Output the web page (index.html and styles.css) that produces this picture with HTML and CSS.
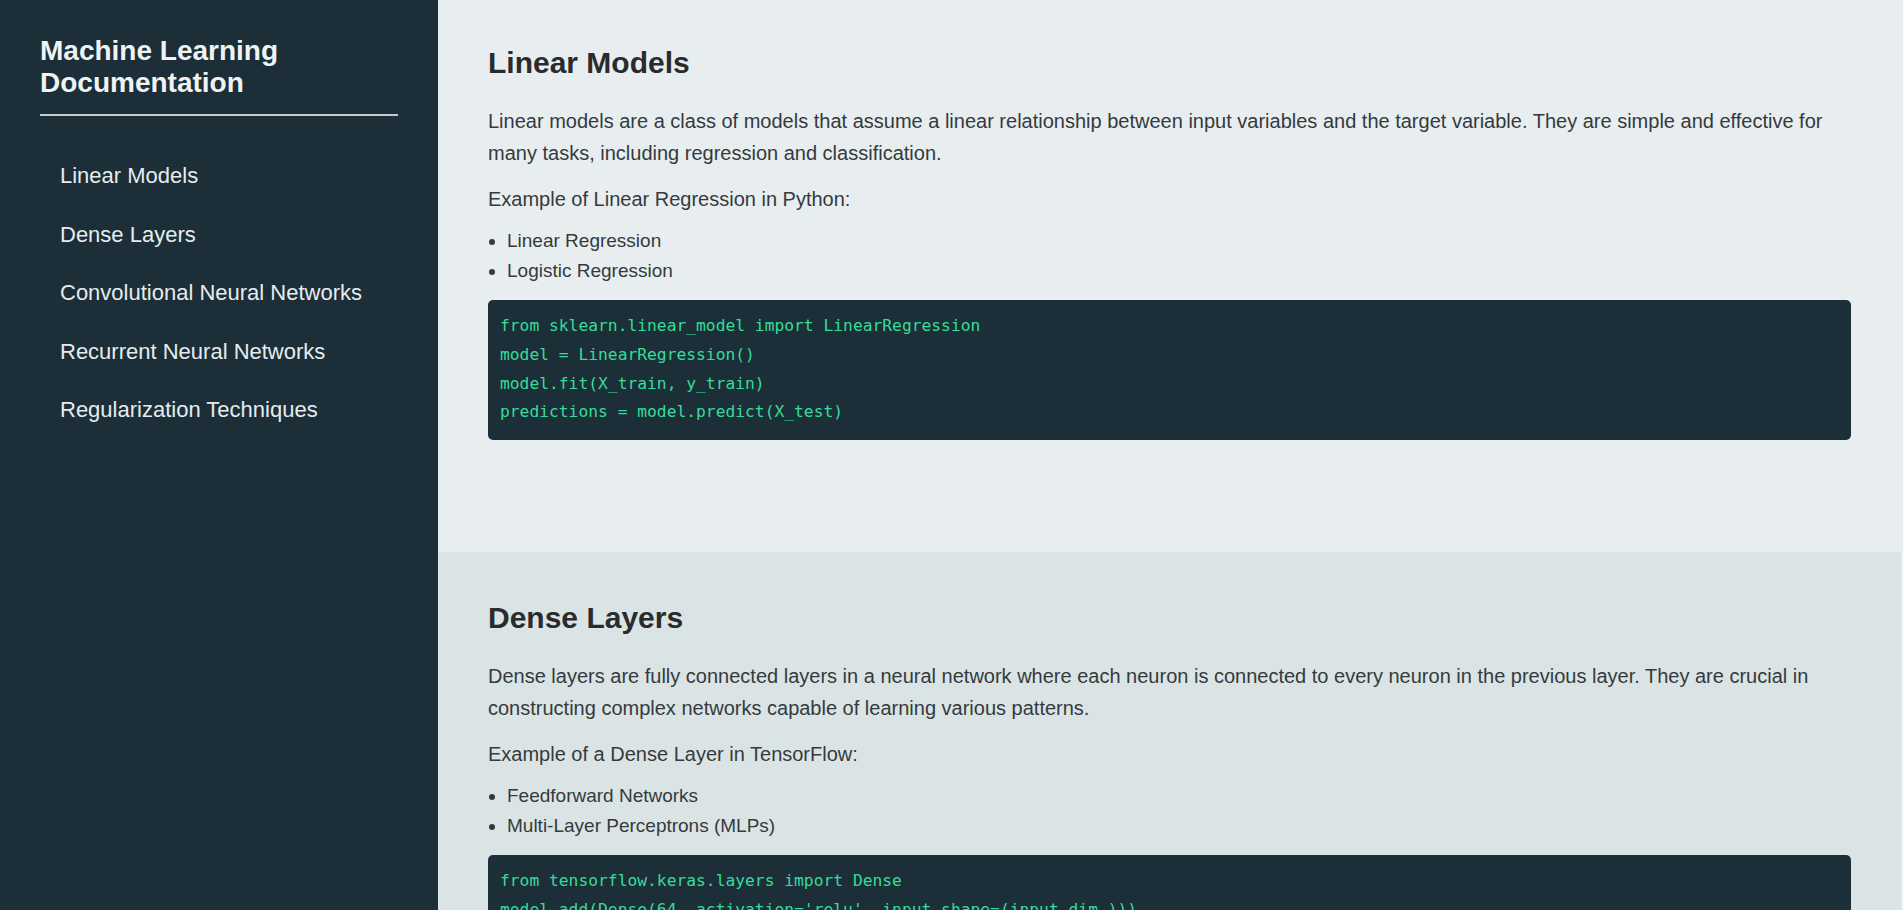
FILE: index.html
```html
<!DOCTYPE html>
<html lang="en">
<head>
<meta charset="utf-8">
<title>Machine Learning Documentation</title>
<link rel="stylesheet" href="styles.css">
</head>
<body>
<div class="layout">
  <aside class="sidebar">
    <h1 class="brand">Machine Learning Documentation</h1>
    <ul class="nav">
      <li><a href="#linear">Linear Models</a></li>
      <li><a href="#dense">Dense Layers</a></li>
      <li><a href="#cnn">Convolutional Neural Networks</a></li>
      <li><a href="#rnn">Recurrent Neural Networks</a></li>
      <li><a href="#reg">Regularization Techniques</a></li>
    </ul>
  </aside>
  <main class="main">
    <section class="doc doc-light" id="linear">
      <h2 class="doc-title">Linear Models</h2>
      <p class="doc-text intro">Linear models are a class of models that assume a linear relationship between input variables and the target variable. They are simple and effective for many tasks, including regression and classification.</p>
      <p class="doc-text example">Example of Linear Regression in Python:</p>
      <ul class="doc-list">
        <li>Linear Regression</li>
        <li>Logistic Regression</li>
      </ul>
      <pre class="code"><code>from sklearn.linear_model import LinearRegression
model = LinearRegression()
model.fit(X_train, y_train)
predictions = model.predict(X_test)</code></pre>
    </section>
    <section class="doc doc-dark" id="dense">
      <h2 class="doc-title">Dense Layers</h2>
      <p class="doc-text intro">Dense layers are fully connected layers in a neural network where each neuron is connected to every neuron in the previous layer. They are crucial in constructing complex networks capable of learning various patterns.</p>
      <p class="doc-text example">Example of a Dense Layer in TensorFlow:</p>
      <ul class="doc-list">
        <li>Feedforward Networks</li>
        <li>Multi-Layer Perceptrons (MLPs)</li>
      </ul>
      <pre class="code"><code>from tensorflow.keras.layers import Dense
model.add(Dense(64, activation='relu', input_shape=(input_dim,)))
model.add(Dense(32, activation='relu'))
model.add(Dense(1, activation='sigmoid'))</code></pre>
    </section>
  </main>
</div>
</body>
</html>
```

FILE: styles.css
```css
html, body {
  margin: 0;
  padding: 0;
}

body {
  font-family: "Liberation Sans", Arial, sans-serif;
  font-size: 20px;
  background: #e8eef0;
  overflow: hidden;
}

.layout {
  display: flex;
  min-height: 100vh;
}

.sidebar {
  flex: 0 0 438px;
  box-sizing: border-box;
  padding: 35px 40px;
  background: #1c2e37;
  color: #eef2f3;
}

.brand {
  margin: 0;
  padding-bottom: 15px;
  border-bottom: 2px solid #c3c9cc;
  font-size: 28px;
  line-height: 32px;
  font-weight: bold;
  color: #eff3f4;
}

.nav {
  list-style: none;
  margin: 37px 0 0;
  padding: 0;
}

.nav li {
  margin-bottom: 13.5px;
}

.nav a {
  display: block;
  padding: 10px 20px;
  font-size: 22px;
  line-height: 25px;
  color: #e6ecee;
  text-decoration: none;
}

.main {
  flex: 1;
  min-width: 0;
  margin-right: 2px;
}

.doc {
  padding: 48px 50px 110px 50px;
}

.doc:first-child {
  padding-top: 45px;
  padding-bottom: 112px;
}

.doc-light {
  background: #e8eef0;
}

.doc-dark {
  background: #dbe4e4;
}

.doc-title {
  margin: 0 0 24px;
  font-size: 30px;
  line-height: 36px;
  font-weight: bold;
  color: #2a2b2c;
}

.doc-text {
  margin: 0;
  font-size: 20px;
  line-height: 32px;
  color: #343a3e;
}

.intro {
  margin-bottom: 14px;
}

.example {
  margin-bottom: 11px;
}

.doc-list {
  margin: 0 0 14px;
  padding-left: 19px;
  font-size: 19px;
  line-height: 30px;
  color: #343a3e;
}

.code {
  margin: 0;
  height: 116px;
  padding: 12px;
  overflow: hidden;
  background: #1c2e37;
  border-radius: 5px;
  font-family: "DejaVu Sans Mono", "Liberation Mono", monospace;
  font-size: 16.3px;
  line-height: 28.8px;
  color: #33de99;
}

.code code {
  font-family: inherit;
}
```
